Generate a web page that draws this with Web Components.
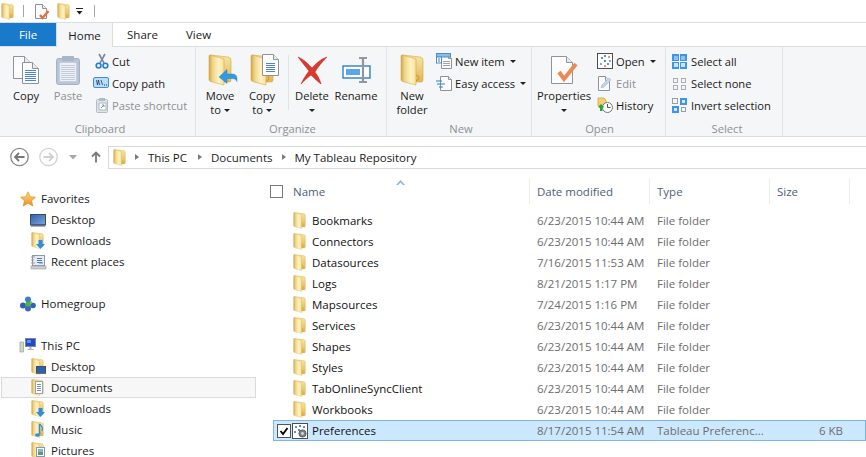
<!DOCTYPE html>
<html>
<head>
<meta charset="utf-8">
<title>My Tableau Repository</title>
<style>
  html, body { margin: 0; height: 457px; overflow: hidden; background: #fff; }
  body { font: 11.5px/15px "Open Sans", "Noto Sans", sans-serif; color: #1a1a1a; }
</style>
</head>
<body>
<x-explorer></x-explorer>
<script>
// folder shape shared by all the yellow icons, drawn in a 24x32 box
const folderDefs = `<defs><linearGradient id="fa" x1="0" x2="1" y1="0" y2="0">
  <stop offset="0" stop-color="#d4a640"/><stop offset=".25" stop-color="#f0d488"/><stop offset=".65" stop-color="#fef3c4"/><stop offset="1" stop-color="#f7e09a"/></linearGradient>
  <linearGradient id="fb" x1="0" x2="0" y1="0" y2="1"><stop offset="0" stop-color="#f8e7a6"/><stop offset="1" stop-color="#e2b651"/></linearGradient></defs>`;
const folderShape = `${folderDefs}
  <path d="M2 1 L20 3 Q23 3.500 23 6 V26 Q23 28 21 28 H13 Z" fill="url(#fb)" stroke="#d0a540" stroke-width=".6"/>
  <path d="M1 2 Q1 .8 2.500 1 L16 5 V31 L2.500 27.500 Q1 27 1 25.500 Z" fill="url(#fa)" stroke="#d3a948" stroke-width=".6"/>
  <path d="M16 21 q3 .5 3 3 t-3 2.500" fill="none" stroke="#c99a32" stroke-width="1"/>`;
// extra is drawn on top in the icon's own pixels
const folderWith = (extra, w = 16, h = 17) => {
  const vb = w < 24 ? "-2 0 30 32" : "0 0 24 32";
  return `<svg width="${w}" height="${h}" viewBox="${vb}" xmlns="http://www.w3.org/2000/svg">${folderShape}</svg>` +
    (extra ? `<svg class="over" width="${w}" height="${h}" viewBox="0 0 ${w} ${h}">${extra}</svg>` : "");
};

const plus = (x, y, c = "#2a5fa8") => `<path d="M${x - 1} ${y}h2M${x} ${y - 1}v2" stroke="${c}" stroke-width=".9"/>`;
const paper = (x, y, w, h, fold = 5) =>
  `<path d="M${x} ${y}h${w - fold}l${fold} ${fold}v${h - fold}h-${w}z" fill="#fdfdfd" stroke="#8e949b"/><path d="M${x + w - fold} ${y}v${fold}h${fold}" fill="#e8ebee" stroke="#8e949b"/>`;
const lines = (x, y, w, n, c = "#5a8cc8", step = 2) =>
  Array.from({ length: n }, (_, i) => `<path d="M${x} ${y + i * step + .5}h${w}" stroke="${c}"/>`).join("");
const svg = (w, h, body) => `<svg width="${w}" height="${h}" viewBox="0 0 ${w} ${h}" xmlns="http://www.w3.org/2000/svg">${body}</svg>`;

const ICONS = {
  folder: () => folderWith(""),
  "folder-big": () => folderWith("", 24, 32),
  "qat-check": () => svg(16, 17, paper(1.5, 1.5, 11, 14, 4) +
    `<path d="M6 12l2.500 3 6-7" fill="none" stroke="#e2703a" stroke-width="2.400"/>`),
  "qat-arrow": () => svg(9, 9, `<path d="M1 1.500h7" stroke="#222"/><path d="M1.500 4h6l-3 3.500z" fill="#222"/>`),
  copy: () => svg(28, 30, paper(1.5, 1.5, 17, 22, 6) + paper(10.5, 7.5, 16, 21, 6) + lines(13, 15, 11, 6, "#4c86c6")),
  paste: () => svg(26, 30, `<rect x="1.500" y="3.500" width="23" height="26" rx="2" fill="#b9c5d6" stroke="#a4b1c6"/>
    <rect x="4.500" y="7.500" width="17" height="19" fill="#edf0f4" stroke="#c5cdd9"/>${lines(6, 10, 14, 8, "#c3ccda")}
    <rect x="7" y="1" width="12" height="5" rx="1" fill="#a9b5c9"/>`),
  cut: () => svg(14, 16, `<path d="M4 1l5 9M10 1L5 10" stroke="#7d8a99" stroke-width="1.600" fill="none"/>
    <circle cx="3.600" cy="12.600" r="2.400" fill="none" stroke="#1f7fd6" stroke-width="1.600"/><circle cx="10.400" cy="12.600" r="2.400" fill="none" stroke="#1f7fd6" stroke-width="1.600"/>`),
  "copy-path": () => svg(17, 12, `<rect x=".5" y=".5" width="15" height="10" rx="1.500" fill="#b9dcf8" stroke="#3f8fd8"/>
    <path d="M3.500 3l1 5 1-5 1 5M8 3l1.500 5" stroke="#1c3d66" stroke-width=".8" fill="none"/><path d="M11 8h1M13 8h1" stroke="#1c3d66"/>`),
  "paste-shortcut": () => svg(14, 16, `<rect x="1.500" y="2.500" width="11" height="13" rx="1" fill="#dfe4ea" stroke="#b2bcc9"/><rect x="4" y="1" width="6" height="3" fill="#b2bcc9"/>
    <rect x="4" y="6" width="7" height="7" fill="#fff" stroke="#a9b6c6"/><path d="M6 11l3-3M7 8h2v2" stroke="#7f93ab" fill="none"/>`),
  "move-to": () => folderWith(`<path d="M11 23l8-7.500V20h5q5 0 5 4.500v3q-1-3-5-3h-5v5z" fill="#2f9be6" stroke="#1f77bb" stroke-width=".4"/>`, 24, 32),
  "copy-to": () => folderWith(paper(12.5, .5, 16, 21, 5) + lines(16, 9, 9, 5, "#4c86c6"), 24, 32),
  delete: () => svg(32, 30, `<path d="M2 2C9 5 13 10 16 13 20 8 25 4 31 2 26 7 22 12 19 17c3 4 5 8 6 12-4-3-7-6-10-9C11 23 8 26 5 29c2-5 5-9 8-13C9 11 5 6 2 2z" fill="#d9392f" stroke="#b6281f" stroke-width=".5"/>`),
  rename: () => svg(29, 26, `<rect x="1" y="9" width="27" height="12" fill="#fff" stroke="#2f7fc4" stroke-width="1.400"/><rect x="4" y="12" width="14" height="6" fill="#5aa6e6"/>
    <path d="M17 1h8M21 1v24M17 25h8" stroke="#8e97a3" stroke-width="2.200" fill="none"/>`),
  "new-item": () => svg(16, 16, paper(5.5, 2.5, 10, 13, 3) + lines(7, 8, 7, 3, "#9aa3ad") +
    `<rect x=".5" y=".5" width="14" height="3.500" fill="#8dbbe8" stroke="#4d8dcb"/><rect x=".5" y="4" width="5" height="6" fill="#fff" stroke="#4d8dcb"/><path d="M2 6h2M2 8h2" stroke="#3c7fc0"/>`),
  "easy-access": () => svg(16, 16, paper(4.5, 1.5, 11, 14, 3) + `<path d="M0 6h6M1 9h8M3 12h4" stroke="#2f7fd0" stroke-width="1"/>`),
  properties: () => svg(28, 30, paper(1.5, 1.5, 21, 27, 6) + `<path d="M9 17l5 7 12-15" fill="none" stroke="#e98a55" stroke-width="4"/>`),
  open: () => svg(16, 16, `<rect x=".5" y=".5" width="15" height="15" fill="#fff" stroke="#4a4f56"/>` +
    plus(4, 11, "#4d83b8") + plus(8, 8, "#1f4f8f") + plus(12, 4, "#e06a2a") + plus(5, 5) + plus(11, 11, "#2a5fa8") + plus(8, 3) + plus(13, 8, "#4d83b8") + plus(8, 13, "#e06a2a")),
  edit: () => svg(15, 16, paper(1.5, 1.5, 11, 14, 4) + `<path d="M4 13l1-3 7-7 2 2-7 7z" fill="#c2d6ea" stroke="#a6bfd8" stroke-width=".7"/>`),
  history: () => svg(16, 16, `<path d="M1 1h6l2 2v6H1z" fill="#f1d26f" stroke="#c9a23c" stroke-width=".7"/>
    <circle cx="10.500" cy="10.500" r="5" fill="#fff" stroke="#6d7782"/><path d="M10.500 7v3.500h3" stroke="#555" fill="none"/>
    <path d="M1 10l3-3 3 3-1.500 1v3H3v-3z" fill="#2fa33a"/>`),
  "select-all": () => svg(15, 15, `<rect width="15" height="15" fill="#3f96e8"/><path d="M7.500 0v15M0 7.500h15" stroke="#fff" stroke-width="1"/><rect x="2" y="9" width="4" height="4" fill="#cfe5fa"/><rect x="9" y="9" width="4" height="4" fill="#cfe5fa"/><rect x="2" y="2" width="4" height="4" fill="#8cc2f3"/><rect x="9" y="2" width="4" height="4" fill="#8cc2f3"/>`),
  "select-none": () => svg(15, 15, [1, 9].flatMap(x => [2, 9].map(y => `<rect x="${x + .5}" y="${y + .5}" width="4" height="4" fill="none" stroke="#a9adb2"/>`)).join("")),
  invert: () => svg(15, 15, `<rect x=".5" y=".5" width="5" height="5" fill="none" stroke="#9a9ea4"/><rect x="8" y="0" width="7" height="7" fill="#3f96e8"/><rect x="10" y="2" width="3" height="3" fill="#cfe5fa"/><rect x="0" y="8" width="7" height="7" fill="#3f96e8"/><rect x="2" y="10" width="3" height="3" fill="#cfe5fa"/><rect x="9.500" y="9.500" width="4" height="4" fill="none" stroke="#9a9ea4"/>`),
  star: () => svg(16, 16, `<defs><linearGradient id="st" x1="0" x2="0" y1="0" y2="1"><stop offset="0" stop-color="#fbe07a"/><stop offset="1" stop-color="#ee8a25"/></linearGradient></defs><path d="M8 .8l2.200 5 5.300.4-4 3.500 1.300 5.300L8 12.200 3.200 15l1.300-5.300-4-3.500 5.300-.4z" fill="url(#st)" stroke="#e08a2c" stroke-width=".7"/>`),
  desktop: () => svg(16, 14, `<defs><linearGradient id="ds" x1="0" x2="1" y1="0" y2="1"><stop offset="0" stop-color="#2b5ea8"/><stop offset="1" stop-color="#7ea8de"/></linearGradient></defs><rect x=".5" y="1.500" width="15" height="10" fill="url(#ds)" stroke="#3c4c62"/><rect x=".5" y="11.500" width="15" height="2" fill="#5b6f8b"/>`),
  recent: () => svg(16, 16, `<rect x="2.500" y="1.500" width="12" height="10" fill="#e8ecef" stroke="#8f979f"/><rect x="1" y="12" width="15" height="3" fill="#c9ced3" stroke="#9aa1a8" stroke-width=".6"/><path d="M1 3h4M1 6h3M1 9h4" stroke="#9aa1a8"/>${lines(7, 4, 5, 3, "#4c7fb5")}<path d="M9 9h4" stroke="#5a8cc8"/>`),
  homegroup: () => svg(16, 16, `<circle cx="8" cy="3.500" r="3" fill="#3f7fd0"/><circle cx="3" cy="9.500" r="3" fill="#2b62b4"/><circle cx="13" cy="9.500" r="2.800" fill="#2b62b4"/><circle cx="8" cy="12.500" r="3" fill="#3d67c0"/><circle cx="8" cy="8" r="2.600" fill="#58ad3f"/><path d="M10 6l2 1" stroke="#6dbb4f" stroke-width="2"/>`),
  pc: () => svg(16, 15, `<rect x="0" y="4" width="3.500" height="10" fill="#cfd5d2" stroke="#7f9a80" stroke-width=".6"/><rect x="5.500" y=".5" width="10" height="8" fill="#1f49c9" stroke="#7f8a98"/><path d="M7 2h4v3H7z" fill="#5f8df0"/><path d="M9.500 9h2v2h2v1h-6v-1h2z" fill="#a9b2bb"/>`),
  "f-desktop": () => folderWith(`<rect x="6.500" y="8.500" width="9" height="6" fill="#2b62b4" stroke="#3c4c62"/><rect x="6" y="14.500" width="10" height="1.500" fill="#5b6f8b"/>`),
  "f-documents": () => folderWith(`<rect x="5.500" y="2.500" width="7" height="12" fill="#fdfdfd" stroke="#9aa3ad"/>${lines(7, 5, 4, 4, "#6d93bd")}`),
  "f-downloads": () => folderWith(`<path d="M8.500 8h4v4h2.500l-4.500 5-4.500-5h2.500z" fill="#2d8ee0"/>`),
  "f-music": () => folderWith(`<path d="M9.500 3v10" stroke="#2d8ee0" stroke-width="1.400"/><ellipse cx="7.500" cy="14" rx="2.500" ry="1.800" fill="#2d8ee0"/><path d="M9.500 3q4 3 2.500 7" fill="none" stroke="#2d8ee0" stroke-width="1.200"/>`),
  "f-pictures": () => folderWith(`<rect x="6.500" y="5.500" width="8" height="9" fill="#fff" stroke="#8e97a3"/><rect x="8" y="7" width="5" height="3" fill="#7fb6e0"/><rect x="8" y="10" width="5" height="3" fill="#5f9a63"/>`),
  prefs: () => svg(16, 16, `<rect x=".5" y=".5" width="15" height="15" fill="#fff" stroke="#4a4f56"/>` +
    plus(4, 4) + plus(8, 3, "#2a5fa8") + plus(12, 4) + plus(3, 9) + plus(7, 7) +
    `<circle cx="10.500" cy="10.500" r="3.600" fill="#7a8088" stroke="#5c6168"/><circle cx="10.500" cy="10.500" r="1.400" fill="#d5d8dc"/>`)
};

class XIcon extends HTMLElement {
  constructor() {
    super();
    const draw = ICONS[this.getAttribute("name")] || (() => "");
    this.attachShadow({ mode: "open" }).innerHTML = `
      <style>
        :host { display: inline-flex; position: relative; flex: none; line-height: 0; }
        svg { display: block; overflow: visible; }
        .over { position: absolute; left: 0; top: 0; }
      </style>${draw()}`;
  }
}

class XQat extends HTMLElement {
  constructor() {
    super();
    this.attachShadow({ mode: "open" }).innerHTML = `
      <style>
        :host { display: flex; align-items: center; height: 22px; border-bottom: 1px solid #dcdddf; padding-left: 0; }
        .sep { width: 1px; height: 12px; background: #a5a5a5; }
      </style>
      <x-icon name="folder"></x-icon>
      <span class="sep" style="margin:0 10px 0 7px"></span>
      <x-icon name="qat-check"></x-icon>
      <x-icon name="folder" style="margin-left:6px"></x-icon>
      <x-icon name="qat-arrow" style="margin-left:3px"></x-icon>
      <span class="sep" style="margin-left:10px"></span>`;
  }
}

class XTabs extends HTMLElement {
  constructor() {
    super();
    this.attachShadow({ mode: "open" }).innerHTML = `
      <style>
        :host { display: flex; height: 24px; box-sizing: border-box; margin-bottom: -1px; position: relative; z-index: 1; }
        div { display: flex; align-items: center; justify-content: center; height: 23px; }
        .file { width: 56px; background: #1979ca; color: #fff; }
        .home { width: 57px; height: 24px; background: #f5f6f7; border: 1px solid #dcdddf; border-width: 0 1px; box-sizing: border-box; }
        .share { margin-left: 15px; width: 29px; }
        .view { margin-left: 29px; width: 25px; }
      </style>
      <div class="file">File</div><div class="home">Home</div><div class="share">Share</div><div class="view">View</div>`;
  }
}

class XRibbonGroup extends HTMLElement {
  constructor() {
    super();
    this.attachShadow({ mode: "open" }).innerHTML = `
      <style>
        :host { display: flex; flex-direction: column; flex: none; box-sizing: border-box; height: 89px; border-right: 1px solid #e2e3e4; }
        .body { flex: 1; display: flex; align-items: flex-start; }
        .label { height: 16px; text-align: center; color: #8d9095; line-height: 17px; }
      </style>
      <div class="body"><slot></slot></div>
      <div class="label">${this.getAttribute("label")}</div>`;
  }
}

class XBigButton extends HTMLElement {
  constructor() {
    super();
    this.attachShadow({ mode: "open" }).innerHTML = `
      <style>
        :host { display: flex; flex-direction: column; align-items: center; flex: none; width: 42px; line-height: 13.500px; text-align: center; }
        :host([disabled]) { color: #8d9095; }
        .icon { height: 32px; margin-top: 7px; margin-bottom: 3px; display: flex; align-items: center; justify-content: center; }
      </style>
      <div class="icon"><slot name="icon"></slot></div>
      <div><slot></slot></div>`;
  }
}

class XSmallButton extends HTMLElement {
  constructor() {
    super();
    this.attachShadow({ mode: "open" }).innerHTML = `
      <style>
        :host { display: flex; align-items: center; height: 22px; white-space: nowrap; }
        :host([disabled]) { color: #8d9095; }
        .icon { width: 19px; display: flex; flex: none; }
        .caret { width: 0; height: 0; border: 3px solid transparent; border-top: 3px solid #222; border-bottom: 0; margin-left: 5px; }
      </style>
      <span class="icon"><slot name="icon"></slot></span><slot></slot>${this.hasAttribute("menu") ? '<span class="caret"></span>' : ""}`;
  }
}

class XSmallCol extends HTMLElement {
  constructor() {
    super();
    this.attachShadow({ mode: "open" }).innerHTML = `
      <style>:host { display: flex; flex-direction: column; padding-top: 3px; flex: none; }</style><slot></slot>`;
  }
}

class XCaret extends HTMLElement {
  constructor() {
    super();
    this.attachShadow({ mode: "open" }).innerHTML = `
      <style>:host { display: inline-block; width: 0; height: 0; border: 3px solid transparent; border-top: 3px solid #222; border-bottom: 0; vertical-align: 2px; }</style>`;
  }
}

class XRibbon extends HTMLElement {
  constructor() {
    super();
    this.attachShadow({ mode: "open" }).innerHTML = `
      <style>
        :host { display: flex; height: 91px; box-sizing: border-box; background: #f5f6f7; border-top: 1px solid #dcdddf; border-bottom: 1px solid #dcdddf; font-size: 11.200px; }
        .rule { width: 1px; height: 55px; margin: 8px 2px 0 5px; background: #e2e3e4; flex: none; }
      </style>
      <x-ribbon-group label="Clipboard" style="width:196px;padding-left:5px">
        <x-big-button>Copy<x-icon slot="icon" name="copy"></x-icon></x-big-button>
        <x-big-button disabled>Paste<x-icon slot="icon" name="paste"></x-icon></x-big-button>
        <x-small-col style="margin-left:4px">
          <x-small-button><x-icon slot="icon" name="cut" style="margin-left:2px"></x-icon>Cut</x-small-button>
          <x-small-button><x-icon slot="icon" name="copy-path"></x-icon>Copy path</x-small-button>
          <x-small-button disabled><x-icon slot="icon" name="paste-shortcut" style="margin-left:2px"></x-icon>Paste shortcut</x-small-button>
        </x-small-col>
      </x-ribbon-group>
      <x-ribbon-group label="Organize" style="width:191px;padding-left:3px">
        <x-big-button><x-icon slot="icon" name="move-to"></x-icon>Move<br>to <x-caret></x-caret></x-big-button>
        <x-big-button><x-icon slot="icon" name="copy-to"></x-icon>Copy<br>to <x-caret></x-caret></x-big-button>
        <span class="rule"></span>
        <x-big-button><x-icon slot="icon" name="delete"></x-icon>Delete<br><x-caret></x-caret></x-big-button>
        <x-big-button style="width:46px"><x-icon slot="icon" name="rename"></x-icon>Rename</x-big-button>
      </x-ribbon-group>
      <x-ribbon-group label="New" style="width:145px;padding-left:4px">
        <x-big-button><x-icon slot="icon" name="folder-big"></x-icon>New<br>folder</x-big-button>
        <x-small-col style="margin-left:3px">
          <x-small-button menu><x-icon slot="icon" name="new-item"></x-icon>New item</x-small-button>
          <x-small-button menu><x-icon slot="icon" name="easy-access"></x-icon>Easy access</x-small-button>
        </x-small-col>
      </x-ribbon-group>
      <x-ribbon-group label="Open" style="width:134px;padding-left:2px">
        <x-big-button style="width:60px"><x-icon slot="icon" name="properties"></x-icon>Properties<br><x-caret></x-caret></x-big-button>
        <x-small-col style="margin-left:3px">
          <x-small-button menu><x-icon slot="icon" name="open"></x-icon>Open</x-small-button>
          <x-small-button disabled><x-icon slot="icon" name="edit"></x-icon>Edit</x-small-button>
          <x-small-button><x-icon slot="icon" name="history"></x-icon>History</x-small-button>
        </x-small-col>
      </x-ribbon-group>
      <x-ribbon-group label="Select" style="width:117px;padding-left:6px">
        <x-small-col>
          <x-small-button><x-icon slot="icon" name="select-all"></x-icon>Select all</x-small-button>
          <x-small-button><x-icon slot="icon" name="select-none"></x-icon>Select none</x-small-button>
          <x-small-button><x-icon slot="icon" name="invert"></x-icon>Invert selection</x-small-button>
        </x-small-col>
      </x-ribbon-group>`;
  }
}

class XAddress extends HTMLElement {
  constructor() {
    super();
    this.attachShadow({ mode: "open" }).innerHTML = `
      <style>
        :host { display: flex; align-items: center; height: 41px; padding-bottom: 1px; box-sizing: border-box; }
        .nav { flex: none; display: flex; align-items: center; width: 108px; height: 20px; padding-left: 10px; box-sizing: border-box; }
        .box { flex: 1; display: flex; align-items: center; height: 23px; box-sizing: border-box; border: 1px solid #d9d9d9; border-right: 0; padding-left: 3px; }
        .chev { width: 0; height: 0; border: 3.500px solid transparent; border-left: 4px solid #7a7a7a; border-right: 0; margin: 0 9px 0 10px; }
        svg { display: block; flex: none; }
      </style>
      <div class="nav">
        <svg width="20" height="20" viewBox="0 0 20 20"><circle cx="9.500" cy="10" r="8.700" fill="#fff" stroke="#8a8a8a" stroke-width="1.300"/><path d="M14.500 10h-9M9 6l-4 4 4 4" fill="none" stroke="#777" stroke-width="1.800"/></svg>
        <svg width="20" height="20" viewBox="0 0 20 20" style="margin-left:9px"><circle cx="9.500" cy="10" r="8.700" fill="#fff" stroke="#d2d2d2" stroke-width="1.300"/><path d="M4.500 10h9M10 6l4 4-4 4" fill="none" stroke="#d0d0d0" stroke-width="1.800"/></svg>
        <svg width="8" height="5" viewBox="0 0 8 5" style="margin-left:10px"><path d="M0 0h8L4 4.500z" fill="#a8a8a8"/></svg>
        <svg width="10" height="12" viewBox="0 0 10 12" style="margin-left:14px"><path d="M5 11.500V2M1 5.500L5 1.500l4 4" fill="none" stroke="#777" stroke-width="1.800"/></svg>
      </div>
      <div class="box">
        <x-icon name="folder"></x-icon>
        <span class="chev" style="margin-left:7px"></span>This PC
        <span class="chev" style="margin-left:11px"></span>Documents
        <span class="chev" style="margin-right:8px"></span>My Tableau Repository
      </div>`;
  }
}

class XNavItem extends HTMLElement {
  constructor() {
    super();
    this.attachShadow({ mode: "open" }).innerHTML = `
      <style>
        :host { display: flex; align-items: center; height: 21px; box-sizing: border-box; padding-left: 20px; white-space: nowrap; }
        :host([child]) { padding-left: 30px; }
        :host([selected]) { background: #f7f7f7; outline: 1px solid #dadada; outline-offset: -1px; margin: 0 1px; padding-left: 29px; }
        .icon { display: flex; align-items: center; width: 21px; flex: none; }
      </style>
      <span class="icon"><x-icon name="${this.getAttribute("icon")}"></x-icon></span><slot></slot>`;
  }
}

class XNavPane extends HTMLElement {
  constructor() {
    super();
    this.attachShadow({ mode: "open" }).innerHTML = `
      <style>
        :host { display: block; flex: none; width: 257px; padding-top: 10px; }
        .gap { height: 21px; }
      </style>
      <x-nav-item icon="star">Favorites</x-nav-item>
      <x-nav-item child icon="desktop">Desktop</x-nav-item>
      <x-nav-item child icon="f-downloads">Downloads</x-nav-item>
      <x-nav-item child icon="recent">Recent places</x-nav-item>
      <div class="gap"></div>
      <x-nav-item icon="homegroup">Homegroup</x-nav-item>
      <div class="gap"></div>
      <x-nav-item icon="pc">This PC</x-nav-item>
      <x-nav-item child icon="f-desktop">Desktop</x-nav-item>
      <x-nav-item child selected icon="f-documents">Documents</x-nav-item>
      <x-nav-item child icon="f-downloads">Downloads</x-nav-item>
      <x-nav-item child icon="f-music">Music</x-nav-item>
      <x-nav-item child icon="f-pictures">Pictures</x-nav-item>`;
  }
}

class XFileRow extends HTMLElement {
  constructor() {
    super();
    const get = a => this.getAttribute(a) || "";
    const checked = this.hasAttribute("selected");
    this.attachShadow({ mode: "open" }).innerHTML = `
      <style>
        :host { display: grid; grid-template-columns: 257px 120px 120px 77px; align-items: center; height: 21px; box-sizing: border-box; white-space: nowrap; }
        :host([selected]) { background: #cce8ff; outline: 1px solid #7db5ea; outline-offset: -1px; }
        .name { display: flex; align-items: center; color: #111; padding-left: 4px; }
        .check { width: 12px; height: 12px; border: 1px solid #555; background: #fff; margin-right: 1px; flex: none; display: flex; }
        .space { width: 15px; flex: none; }
        .icon { width: 20px; flex: none; display: flex; }
        .col { padding-left: 7px; color: #6d6d6d; }
        .size { text-align: right; padding: 0 4px 0 0; color: #6d6d6d; }
      </style>
      <div class="name">
        ${checked ? '<span class="check"><svg width="12" height="12" viewBox="0 0 12 12"><path d="M2.500 6l2.500 3 4.500-6" fill="none" stroke="#000" stroke-width="1.800"/></svg></span>' : '<span class="space"></span>'}
        <span class="icon"><x-icon name="${get("icon") || "folder"}"></x-icon></span>${get("name")}
      </div>
      <div class="col">${get("date")}</div>
      <div class="col">${get("type")}</div>
      <div class="size">${get("size")}</div>`;
  }
}

class XFileList extends HTMLElement {
  constructor() {
    super();
    this.attachShadow({ mode: "open" }).innerHTML = `
      <style>
        :host { display: block; flex: 1; position: relative; }
        .head { display: grid; grid-template-columns: 273px 120px 120px 80px; height: 32px; color: #4c607a; box-sizing: border-box; }
        .head div { height: 26px; border-right: 1px solid #eeeeef; display: flex; align-items: center; padding-left: 7px; box-sizing: border-box; }
        .head .first { padding-left: 13px; }
        .box { width: 13px; height: 13px; box-sizing: border-box; border: 1px solid #7a7a7a; margin-right: 10px; }
        .rows { margin-left: 16px; }
        .sort { position: absolute; left: 139px; top: 2px; }
      </style>
      <div class="head">
        <div class="first"><span class="box"></span>Name</div>
        <div>Date modified</div>
        <div>Type</div>
        <div>Size</div>
      </div>
      <svg class="sort" width="9" height="5" viewBox="0 0 9 5"><path d="M0 5L4.500 0 9 5H7L4.500 2.500 2 5z" fill="#8cb4d8"/></svg>
      <div class="rows"><slot></slot></div>`;
  }
}

class XExplorer extends HTMLElement {
  constructor() {
    super();
    const folders = [
      ["Bookmarks", "6/23/2015 10:44 AM"], ["Connectors", "6/23/2015 10:44 AM"],
      ["Datasources", "7/16/2015 11:53 AM"], ["Logs", "8/21/2015 1:17 PM"],
      ["Mapsources", "7/24/2015 1:16 PM"], ["Services", "6/23/2015 10:44 AM"],
      ["Shapes", "6/23/2015 10:44 AM"], ["Styles", "6/23/2015 10:44 AM"],
      ["TabOnlineSyncClient", "6/23/2015 10:44 AM"], ["Workbooks", "6/23/2015 10:44 AM"]
    ];
    this.attachShadow({ mode: "open" }).innerHTML = `
      <style>
        :host { display: block; height: 457px; overflow: hidden; }
        .main { display: flex; }
      </style>
      <x-qat></x-qat>
      <x-tabs></x-tabs>
      <x-ribbon></x-ribbon>
      <x-address></x-address>
      <div class="main">
        <x-nav-pane></x-nav-pane>
        <x-file-list>
          ${folders.map(f => `<x-file-row name="${f[0]}" date="${f[1]}" type="File folder"></x-file-row>`).join("")}
          <x-file-row selected icon="prefs" name="Preferences" date="8/17/2015 11:54 AM" type="Tableau Preferenc..." size="6 KB"></x-file-row>
        </x-file-list>
      </div>`;
  }
}

customElements.define("x-icon", XIcon);
customElements.define("x-caret", XCaret);
customElements.define("x-qat", XQat);
customElements.define("x-tabs", XTabs);
customElements.define("x-ribbon-group", XRibbonGroup);
customElements.define("x-big-button", XBigButton);
customElements.define("x-small-button", XSmallButton);
customElements.define("x-small-col", XSmallCol);
customElements.define("x-ribbon", XRibbon);
customElements.define("x-address", XAddress);
customElements.define("x-nav-item", XNavItem);
customElements.define("x-nav-pane", XNavPane);
customElements.define("x-file-row", XFileRow);
customElements.define("x-file-list", XFileList);
customElements.define("x-explorer", XExplorer);
</script>
</body>
</html>
